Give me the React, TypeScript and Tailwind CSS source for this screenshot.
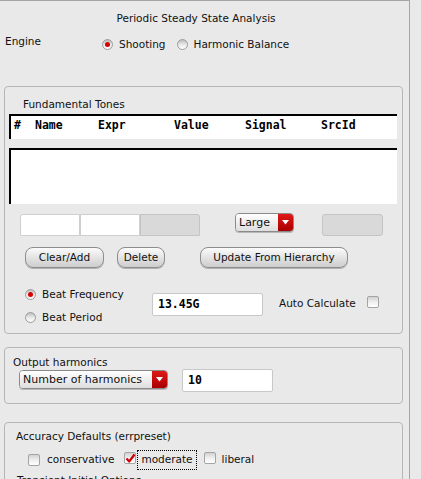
import React from "react";

const sans = { fontFamily: '"DejaVu Sans", sans-serif' };

const Radio = ({ on }: { on?: boolean }) => (
  <span className="relative inline-flex w-[11px] h-[11px] shrink-0 rounded-full border border-[#9c9c9c] bg-gradient-to-b from-[#bdbdbd] via-[#e8e8e8] to-white items-center justify-center">
    {on && <span className="w-[5px] h-[5px] rounded-full bg-[#d80000]" />}
  </span>
);

const Check = ({ on }: { on?: boolean }) => (
  <span className="relative inline-block w-[12px] h-[12px] shrink-0 rounded-[2px] border border-[#a4a4a4] bg-gradient-to-b from-[#d2d2d2] via-[#efefef] to-white">
    {on && (
      <svg className="absolute left-[0px] top-[0px]" width="11" height="11" viewBox="0 0 11 11">
        <path d="M1.5 5.5 L4.2 8.5 L9.5 1.5" fill="none" stroke="#d00000" strokeWidth="2.2" strokeLinejoin="round" />
      </svg>
    )}
  </span>
);

const Button = ({ label, w }: { label: string; w: string }) => (
  <div
    className={`${w} h-[21px] rounded-[8px] border border-[#8d8d8d] bg-gradient-to-b from-[#fbfbfb] to-[#cdcdcd] shadow-[0_1px_0_#b0b0b0] flex items-center justify-center text-[10.5px] text-[#111]`}
  >
    {label}
  </div>
);

const Select = ({ label, w, h }: { label: string; w: string; h: string }) => (
  <div className={`${w} ${h} flex rounded-[4px] border border-[#8a8a8a] overflow-hidden shadow-[0_1px_0_#b8b8b8]`}>
    <div className="flex-1 bg-gradient-to-b from-white to-[#dedede] pl-[3px] flex items-center text-[11px] text-[#111]">
      {label}
    </div>
    <div className="w-[15px] bg-gradient-to-b from-[#e01818] to-[#a80000] flex items-center justify-center">
      <svg width="7" height="5" viewBox="0 0 7 5">
        <path d="M0 0 H7 L3.5 4.5 Z" fill="#fff" />
      </svg>
    </div>
  </div>
);

const mono = { fontFamily: '"DejaVu Sans Mono", monospace' };

export default function App() {
  return (
    <div className="w-[421px] h-[479px] overflow-hidden bg-[#e9e9e9] flex text-[10.5px] leading-[13px] text-[#111]" style={sans}>
      <div className="w-[410px] shrink-0 border-t border-r border-[#a5a5a5] flex flex-col">
        <div className="shrink-0 pt-[11px] h-[24px] w-[392px] text-center">Periodic Steady State Analysis</div>

        <div className="shrink-0 h-[61px] pt-[10px] flex items-start">
          <div className="w-[102px] pl-[5px]">Engine</div>
          <div className="mt-[3px] flex items-center">
            <Radio on />
            <span className="ml-[6px]">Shooting</span>
            <span className="ml-[11px]" />
            <Radio />
            <span className="ml-[6px]">Harmonic Balance</span>
          </div>
        </div>

        {/* Fundamental tones */}
        <div className="ml-[4px] w-[399px] h-[248px] shrink-0 rounded-[4px] border border-[#b6b6b6] flex flex-col">
          <div className="shrink-0 pt-[11px] pl-[18px] h-[24px]">Fundamental Tones</div>
          <div
            className="shrink-0 mt-[3px] ml-[4px] w-[388px] h-[25px] bg-white border-t-2 border-l-2 border-black pt-[3px] pl-[3px] flex font-bold text-[11.5px] leading-[13px] text-black"
            style={mono}
          >
            <span className="w-[21px]">#</span>
            <span className="w-[63px]">Name</span>
            <span className="w-[76px]">Expr</span>
            <span className="w-[71px]">Value</span>
            <span className="w-[76px]">Signal</span>
            <span>SrcId</span>
          </div>
          <div className="shrink-0 mt-[9px] ml-[4px] w-[388px] h-[56px] bg-white border-t-2 border-l-2 border-black" />

          <div className="shrink-0 mt-[10px] ml-[15px] flex items-start">
            <div className="w-[60px] h-[22px] bg-white border border-[#cfcfcf] rounded-tl-[3px]" />
            <div className="w-[60px] h-[22px] bg-white border border-[#cfcfcf]" />
            <div className="w-[60px] h-[22px] bg-[#d9d9d9] border border-[#c4c4c4] rounded-tr-[3px]" />
            <div className="ml-[35px] -mt-[1px]">
              <Select label="Large" w="w-[59px]" h="h-[19px]" />
            </div>
            <div className="ml-[28px] w-[61px] h-[22px] bg-[#d9d9d9] border border-[#c4c4c4] rounded-[3px]" />
          </div>

          <div className="shrink-0 mt-[11px] ml-[20px] flex items-center">
            <Button label="Clear/Add" w="w-[79px]" />
            <div className="ml-[13px]">
              <Button label="Delete" w="w-[48px]" />
            </div>
            <div className="ml-[35px]">
              <Button label="Update From Hierarchy" w="w-[148px]" />
            </div>
          </div>

          <div className="shrink-0 mt-[19px] ml-[20px] flex items-start">
            <div className="w-[127px] flex flex-col gap-[9px]">
              <div className="h-[14px] flex items-center">
                <Radio on />
                <span className="ml-[6px]">Beat Frequency</span>
              </div>
              <div className="h-[14px] flex items-center">
                <Radio />
                <span className="ml-[6px]">Beat Period</span>
              </div>
            </div>
            <div
              className="mt-[6px] w-[111px] h-[23px] bg-white border border-[#c8c8c8] rounded-[2px] pl-[5px] flex items-center font-bold text-[11.5px] text-black"
              style={mono}
            >
              13.45G
            </div>
            <div className="ml-[16px] mt-[10px] h-[13px] flex items-center">
              <span>Auto Calculate</span>
              <span className="ml-[11px] -mt-[1px]">
                <Check />
              </span>
            </div>
          </div>
        </div>

        {/* Output harmonics */}
        <div className="mt-[13px] ml-[4px] w-[399px] h-[57px] shrink-0 rounded-[4px] border border-[#b6b6b6] flex flex-col">
          <div className="shrink-0 pt-[8px] pl-[8px] h-[21px]">Output harmonics</div>
          <div className="shrink-0 ml-[14px] flex items-start">
            <div className="mt-[1px]">
              <Select label="Number of harmonics" w="w-[149px]" h="h-[19px]" />
            </div>
            <div
              className="ml-[14px] w-[91px] h-[23px] bg-white border border-[#c8c8c8] rounded-[2px] pl-[5px] flex items-center font-bold text-[11.5px] text-black"
              style={mono}
            >
              10
            </div>
          </div>
        </div>

        {/* Accuracy defaults */}
        <div className="mt-[18px] ml-[4px] w-[399px] h-[100px] shrink-0 rounded-t-[4px] border border-[#b6b6b6] flex flex-col">
          <div className="shrink-0 pt-[7px] pl-[11px] h-[20px]">Accuracy Defaults (errpreset)</div>
          <div className="shrink-0 mt-[7px] ml-[23px] h-[19px] flex items-center">
            <Check />
            <span className="ml-[7px]">conservative</span>
            <span className="ml-[10px]">
              <Check on />
            </span>
            <span className="ml-[1px] h-[20px] px-[3px] flex items-center border border-dotted border-black">moderate</span>
            <span className="ml-[7px]">
              <Check />
            </span>
            <span className="ml-[6px]">liberal</span>
          </div>
          <div className="shrink-0 mt-[5px] pl-[12px]">Transient Initial Options</div>
        </div>
      </div>
      <div className="flex-1" />
    </div>
  );
}
